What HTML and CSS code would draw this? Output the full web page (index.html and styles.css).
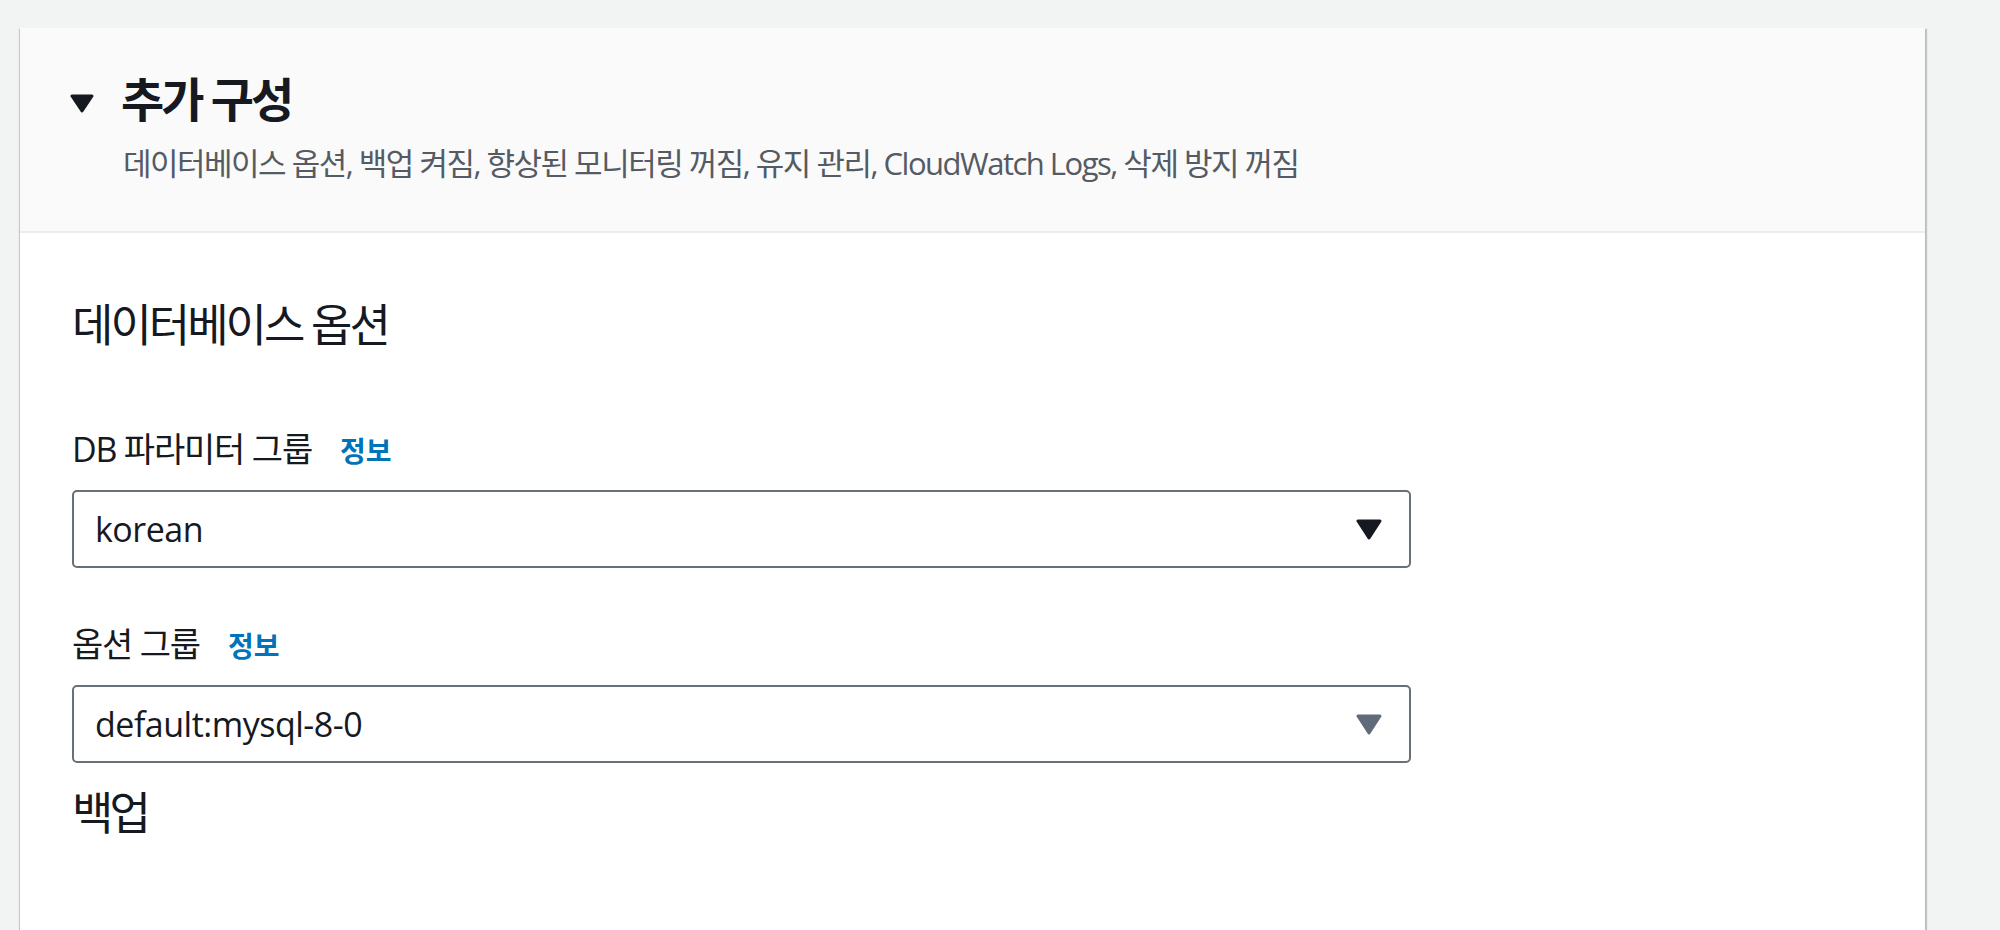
FILE: index.html
```html
<!DOCTYPE html>
<html lang="ko">
<head>
<meta charset="utf-8">
<title>추가 구성</title>
<link rel="stylesheet" href="styles.css">
</head>
<body>
<div class="page">
  <section class="card">
    <header class="card-header">
      <svg class="caret" width="24" height="19" viewBox="0 0 24 19"><polygon points="2,2 22,2 12,17" fill="#16191f" stroke="#16191f" stroke-width="3" stroke-linejoin="round"/></svg>
      <div class="heading">
        <h2 class="title">추가 구성</h2>
        <p class="subtitle">데이터베이스 옵션, 백업 켜짐, 향상된 모니터링 꺼짐, 유지 관리, CloudWatch Logs, 삭제 방지 꺼짐</p>
      </div>
    </header>
    <div class="card-body">
      <h3 class="section-title">데이터베이스 옵션</h3>
      <div class="field field-first">
        <div class="label-row"><span class="label">DB 파라미터 그룹</span><a class="info">정보</a></div>
        <div class="select">
          <span class="value">korean</span>
          <svg class="arrow" width="26" height="21" viewBox="0 0 26 21"><polygon points="2,2 24,2 13,19" fill="#16191f" stroke="#16191f" stroke-width="3" stroke-linejoin="round"/></svg>
        </div>
      </div>
      <div class="field">
        <div class="label-row"><span class="label">옵션 그룹</span><a class="info">정보</a></div>
        <div class="select">
          <span class="value">default:mysql-8-0</span>
          <svg class="arrow" width="26" height="21" viewBox="0 0 26 21"><polygon points="2,2 24,2 13,19" fill="#5f6b7a" stroke="#5f6b7a" stroke-width="3" stroke-linejoin="round"/></svg>
        </div>
      </div>
      <h3 class="section-title backup">백업</h3>
    </div>
  </section>
</div>
</body>
</html>
```
FILE: styles.css
```css
html, body {
  margin: 0;
  padding: 0;
  background: #f2f3f3;
}
body {
  font-family: "Open Sans", "Noto Sans CJK KR", sans-serif;
  color: #16191f;
  overflow: hidden;
}
.page {
  padding: 28px 75px 0 20px;
}
.card {
  background: #ffffff;
  box-shadow: 0 1px 1px 0 rgba(0, 28, 36, 0.3), 2px 1px 1px 0 rgba(0, 28, 36, 0.2), -1px 1px 1px 0 rgba(0, 28, 36, 0.15);
  min-height: 1000px;
}
.card-header {
  background: #fafafa;
  border-bottom: 2px solid #eaeded;
  display: flex;
  align-items: flex-start;
  gap: 27px;
  padding: 45px 0 51px 50px;
  height: 107px;
}
.caret {
  margin-top: 21px;
  flex: none;
}
.heading {
  display: flex;
  flex-direction: column;
  gap: 20px;
}
.title {
  margin: 0;
  font-size: 47px;
  line-height: 52px;
  font-weight: 700;
  letter-spacing: -3px;
}
.subtitle {
  margin: 0;
  font-size: 31px;
  line-height: 36px;
  color: #545b64;
  letter-spacing: -1.5px;
  padding-left: 2px;
}
.card-body {
  padding: 67px 0 0 52px;
}
.section-title {
  margin: 0;
  font-size: 45px;
  line-height: 50px;
  font-weight: 400;
  letter-spacing: -3px;
}
.field {
  margin-top: 55px;
  width: 1339px;
}
.field-first {
  margin-top: 78px;
}
.label-row {
  display: flex;
  align-items: baseline;
  height: 42px;
  line-height: 42px;
  margin-bottom: 20px;
}
.label {
  font-size: 34px;
  letter-spacing: -1.2px;
  font-weight: 400;
}
.info {
  font-size: 28px;
  font-weight: 700;
  color: #0073bb;
  letter-spacing: 0;
  margin-left: 28px;
}
.select {
  box-sizing: border-box;
  height: 78px;
  border: 2px solid #687078;
  border-radius: 5px;
  display: flex;
  align-items: center;
  justify-content: space-between;
  padding: 0 27px 0 21px;
  background: #ffffff;
}
.value {
  font-size: 34px;
  line-height: 74px;
  letter-spacing: -0.5px;
}
.arrow {
  flex: none;
}
.backup {
  margin-top: 25px;
  letter-spacing: -4px;
}
```
